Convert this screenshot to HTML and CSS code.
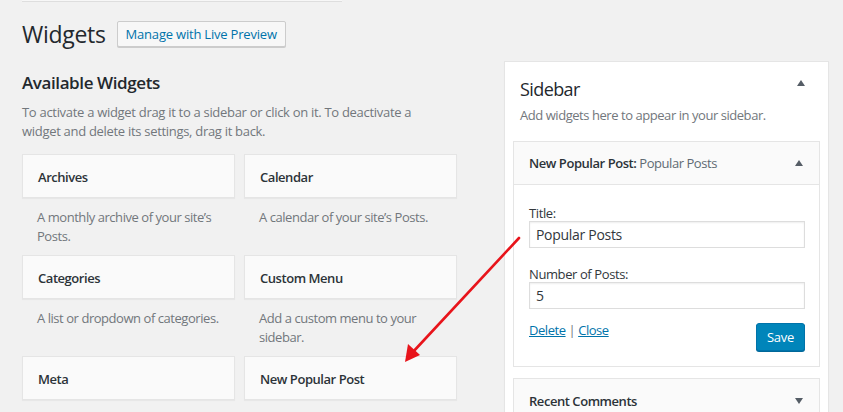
FILE: index.html
```html
<!DOCTYPE html>
<html>
<head>
<meta charset="utf-8">
<link rel="stylesheet" href="styles.css">
</head>
<body>
<div class="page">
  <div class="topbar"></div>
  <div class="head">
    <h1>Widgets</h1>
    <a class="btn" href="#">Manage with Live Preview</a>
  </div>
  <div class="cols">
    <div class="left">
      <h2>Available Widgets</h2>
      <p class="intro">To activate a widget drag it to a sidebar or click on it. To deactivate a widget and delete its settings, drag it back.</p>
      <div class="grid">
        <div class="widget"><div class="wtitle">Archives</div><div class="wdesc">A monthly archive of your site’s Posts.</div></div>
        <div class="widget"><div class="wtitle">Calendar</div><div class="wdesc">A calendar of your site’s Posts.</div></div>
        <div class="widget"><div class="wtitle">Categories</div><div class="wdesc">A list or dropdown of categories.</div></div>
        <div class="widget"><div class="wtitle">Custom Menu</div><div class="wdesc">Add a custom menu to your sidebar.</div></div>
        <div class="widget"><div class="wtitle">Meta</div><div class="wdesc"></div></div>
        <div class="widget"><div class="wtitle">New Popular Post</div><div class="wdesc"></div></div>
      </div>
    </div>
    <div class="right">
      <div class="sidebar">
        <div class="sb-head">
          <h2>Sidebar</h2>
          <span class="tri up"></span>
        </div>
        <p class="sb-desc">Add widgets here to appear in your sidebar.</p>
        <div class="sw open">
          <div class="sw-top">
            <div class="sw-title">New Popular Post:<span class="in"> Popular Posts</span></div>
            <span class="tri up"></span>
          </div>
          <div class="sw-body">
            <label class="lbl">Title:</label>
            <input class="field" type="text" value="Popular Posts">
            <label class="lbl">Number of Posts:</label>
            <input class="field" type="text" value="5">
            <div class="actions">
              <div class="links"><a href="#">Delete</a> <span class="sep">|</span> <a href="#">Close</a></div>
              <button class="save">Save</button>
            </div>
          </div>
        </div>
        <div class="sw">
          <div class="sw-top">
            <div class="sw-title">Recent Comments</div>
            <span class="tri down"></span>
          </div>
        </div>
      </div>
    </div>
  </div>
  <svg class="arrow" width="843" height="412" viewBox="0 0 843 412">
    <line x1="519" y1="238" x2="412" y2="353" stroke="#e8141b" stroke-width="2.6" stroke-linecap="round"/>
    <polygon points="405,362 408,344 420,355" fill="#e8141b"/>
  </svg>
</div>
</body>
</html>
```

FILE: styles.css
```css
* { box-sizing: border-box; }
html, body { margin: 0; padding: 0; }
body {
  background: #f1f1f1;
  font-family: "Open Sans", "Noto Sans", sans-serif;
  font-size: 13px;
  color: #23282d;
  width: 843px;
  height: 412px;
  overflow: hidden;
}
.page {
  position: relative;
  padding-left: 22px;
  height: 412px;
}
.topbar {
  width: 320px;
  height: 2px;
  background: #f7f7f7;
  border-bottom: 1px solid #dedede;
}
.head {
  display: flex;
  align-items: center;
  margin-top: 18px;
  height: 28px;
}
h1 {
  margin: 0;
  font-size: 23px;
  font-weight: 400;
  letter-spacing: -0.3px;
  line-height: 28px;
}
.btn {
  margin-left: 11px;
  height: 26px;
  padding: 0 8px;
  border: 1px solid #cccccc;
  background: #f7f7f7;
  border-radius: 2px;
  color: #0073aa;
  text-decoration: none;
  font-size: 13px;
  letter-spacing: -0.2px;
  line-height: 24px;
  box-shadow: 0 1px 0 #ccc;
}
.cols {
  display: flex;
  margin-top: 23px;
}
.left { width: 435px; }
h2 {
  margin: 0;
  font-size: 17px;
  font-weight: 600;
  letter-spacing: -0.4px;
  line-height: 24px;
  height: 24px;
  color: #23282d;
}
.intro {
  margin: 8px 0 0;
  max-width: 400px;
  color: #72777c;
  line-height: 19px;
  letter-spacing: -0.3px;
}
.grid {
  margin-top: 13px;
  display: grid;
  grid-template-columns: 213px 213px;
  column-gap: 9px;
}
.widget { height: 101px; }
.wtitle {
  height: 44px;
  background: #fafafa;
  border: 1px solid #e5e5e5;
  box-shadow: 0 1px 1px rgba(0,0,0,0.04);
  padding: 1px 15px 0;
  display: flex;
  align-items: center;
  font-weight: 600;
  color: #2c3338;
  letter-spacing: -0.45px;
}
.wdesc {
  padding: 10px 15px 0;
  color: #72777c;
  line-height: 19px;
  letter-spacing: -0.45px;
}
.right {
  margin-left: 47px;
  margin-top: -10px;
  width: 325px;
}
.sidebar {
  background: #fff;
  border: 1px solid #e5e5e5;
  box-shadow: 0 1px 1px rgba(0,0,0,0.04);
  padding: 0 8px;
  height: 400px;
}
.sb-head {
  display: flex;
  align-items: center;
  justify-content: space-between;
  padding: 14px 15px 0 7px;
}
.sb-head h2 {
  font-weight: 400;
  font-size: 18px;
  letter-spacing: -0.6px;
  height: 26px;
  line-height: 26px;
}
.sb-head .tri { margin-top: -12px; }
.sb-desc {
  margin: 4px 0 0 7px;
  color: #72777c;
  line-height: 19px;
  letter-spacing: -0.45px;
}
.tri {
  width: 0; height: 0;
  border-left: 4.5px solid transparent;
  border-right: 4.5px solid transparent;
}
.tri.up { border-bottom: 6px solid #555d66; }
.tri.down { border-top: 6px solid #555d66; }
.sw {
  border: 1px solid #e5e5e5;
  background: #fafafa;
  margin-top: 11px;
}
.sw.open { margin-top: 16px; }
.sw-top {
  height: 43px;
  display: flex;
  align-items: center;
  justify-content: space-between;
  padding: 0 16px 0 15px;
}
.sw.open .sw-top { border-bottom: 1px solid #e5e5e5; }
.sw-title {
  font-weight: 600;
  color: #2c3338;
  letter-spacing: -0.45px;
}
.sw-title .in { font-weight: 400; color: #606a73; }
.sw-body {
  background: #fff;
  padding: 20px 14px 15px 15px;
  display: flex;
  flex-direction: column;
}
.lbl {
  line-height: 16px;
  letter-spacing: -0.4px;
  color: #32373c;
}
.field {
  margin-top: 0;
  margin-bottom: 18px;
  height: 27px;
  width: 100%;
  border: 1px solid #dddddd;
  box-shadow: inset 0 1px 2px rgba(0,0,0,0.07);
  font-family: inherit;
  font-size: 14px;
  color: #32373c;
  padding: 0 6px;
  letter-spacing: -0.3px;
}
.actions {
  margin-top: -5px;
  display: flex;
  justify-content: space-between;
  align-items: flex-start;
}
.links { line-height: 17px; letter-spacing: -0.45px; }
.links a { color: #0073aa; text-decoration: underline; }
.sep { color: #72777c; }
.save {
  margin-top: 1px;
  height: 28px;
  width: 49px;
  background: #0085ba;
  border: 1px solid #0073aa;
  border-radius: 3px;
  box-shadow: 0 1px 0 #006799;
  color: #fff;
  font-family: inherit;
  font-size: 13px;
  letter-spacing: -0.3px;
  padding: 0;
}
.arrow {
  position: absolute;
  left: 0;
  top: 0;
  pointer-events: none;
}
```
